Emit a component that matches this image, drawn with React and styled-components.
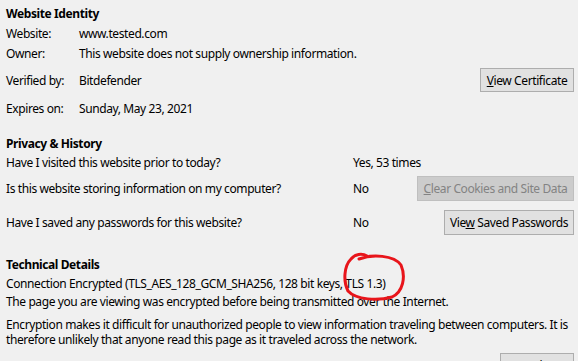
import React from 'react'
import styled, { createGlobalStyle } from 'styled-components'

const Global = createGlobalStyle`
    html, body {
        margin: 0;
        background: #f0f0f0;
        overflow: hidden;
    }
    body {
        font-family: "Noto Sans", "Open Sans", sans-serif;
        font-size: 12px;
        letter-spacing: -0.4px;
        color: #000;
    }
`

const Page = styled.div`
    position: relative;
    width: 578px;
    padding: 3px 4px 0 6px;
    box-sizing: border-box;
    display: flex;
    flex-direction: column;
    & > * {
        flex-shrink: 0;
    }
`

const Heading = styled.div`
    height: 20px;
    display: flex;
    align-items: center;
    font-weight: 700;
    margin-top: ${p => p.$top || 0}px;
`

const Row = styled.div`
    display: grid;
    grid-template-columns: ${p => p.$cols};
    align-items: center;
    height: ${p => p.$h}px;
    margin-top: ${p => p.$top || 0}px;
    white-space: nowrap;
`

const Cell = styled.span`
    justify-self: start;
`

const Button = styled.button`
    font: inherit;
    letter-spacing: inherit;
    color: ${p => p.disabled ? '#838383' : '#000'};
    background: ${p => p.disabled ? '#cccccc' : '#e1e1e1'};
    border: 1px solid ${p => p.disabled ? '#bfbfbf' : '#adadad'};
    width: ${p => p.$w}px;
    height: ${p => p.$h || 24}px;
    padding: 0;
    border-radius: 0;
    justify-self: end;
    white-space: nowrap;
`

const Line = styled.div`
    height: 18px;
    display: flex;
    align-items: center;
    white-space: nowrap;
`

const Para = styled.p`
    margin: 7px 0 0;
    line-height: 15px;
`

const Bottom = styled.div`
    display: flex;
    justify-content: flex-end;
    margin-top: 6px;
`

const Scribble = styled.svg`
    position: absolute;
    left: 0;
    top: 0;
    pointer-events: none;
`

const IDENT = '73px 1fr auto'
const PRIV = '347px 1fr auto'

export default function App() {
  return (
    <Page>
      <Global />
      <Heading>Website Identity</Heading>
      <Row $cols={IDENT} $h={20}>
        <Cell>Website:</Cell><Cell>www.tested.com</Cell>
      </Row>
      <Row $cols={IDENT} $h={20}>
        <Cell>Owner:</Cell><Cell>This website does not supply ownership information.</Cell>
      </Row>
      <Row $cols={IDENT} $h={24} $top={5}>
        <Cell>Verified by:</Cell><Cell>Bitdefender</Cell>
        <Button $w={94}><u>V</u>iew Certificate</Button>
      </Row>
      <Row $cols={IDENT} $h={20} $top={6}>
        <Cell>Expires on:</Cell><Cell>Sunday, May 23, 2021</Cell>
      </Row>

      <Heading $top={15}>Privacy &amp; History</Heading>
      <Row $cols={PRIV} $h={18}>
        <Cell>Have I visited this website prior to today?</Cell><Cell>Yes, 53 times</Cell>
      </Row>
      <Row $cols={PRIV} $h={25} $top={5}>
        <Cell>Is this website storing information on my computer?</Cell><Cell>No</Cell>
        <Button $w={157} $h={25} disabled><u>C</u>lear Cookies and Site Data</Button>
      </Row>
      <Row $cols={PRIV} $h={25} $top={9}>
        <Cell>Have I saved any passwords for this website?</Cell><Cell>No</Cell>
        <Button $w={130} $h={25}>Vie<u>w</u> Saved Passwords</Button>
      </Row>

      <Heading $top={19}>Technical Details</Heading>
      <Line>Connection Encrypted (TLS_AES_128_GCM_SHA256, 128 bit keys, TLS 1.3)</Line>
      <Line>The page you are viewing was encrypted before being transmitted over the Internet.</Line>
      <Para>
        Encryption makes it difficult for unauthorized people to view information traveling between computers. It is
        therefore unlikely that anyone read this page as it traveled across the network.
      </Para>
      <Bottom>
        <Button $w={74}><u>H</u>elp</Button>
      </Bottom>

      <Scribble width="578" height="361" viewBox="0 0 578 361">
        <path
          d="M359 259 C372 254 394 255 401 265 C406 277 403 292 392 297 C378 301 356 300 348 291 C343 281 344 266 351 259 C355 254 362 253 367 256"
          fill="none" stroke="#e8151b" strokeWidth="3" strokeLinecap="round" strokeLinejoin="round"
        />
      </Scribble>
    </Page>
  )
}
